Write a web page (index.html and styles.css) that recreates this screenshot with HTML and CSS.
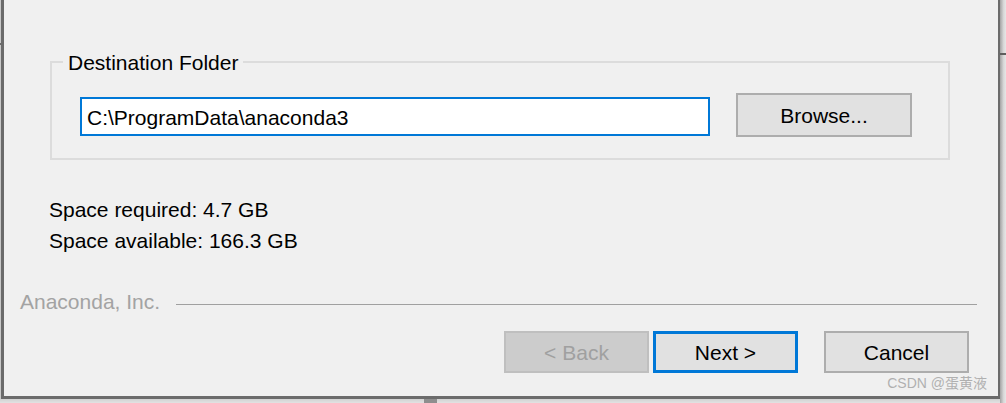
FILE: index.html
```html
<!DOCTYPE html>
<html>
<head>
<meta charset="utf-8">
<link rel="stylesheet" href="styles.css">
</head>
<body>
<div class="window">
  <fieldset class="group">
    <legend class="group-title">Destination Folder</legend>
    <div class="path-row">
      <input class="path-input" type="text" value="C:\ProgramData\anaconda3">
      <button class="btn browse">Browse...</button>
    </div>
  </fieldset>
  <div class="space">
    <div class="space-line">Space required: 4.7 GB</div>
    <div class="space-line">Space available: 166.3 GB</div>
  </div>
  <div class="brand-row">
    <span class="brand">Anaconda, Inc.</span>
    <span class="brand-line"></span>
  </div>
  <div class="actions">
    <button class="btn back" disabled>&lt; Back</button>
    <button class="btn next">Next &gt;</button>
    <button class="btn cancel">Cancel</button>
  </div>
  <div class="watermark">CSDN @蛋黄液</div>
</div>
</body>
</html>
```

FILE: styles.css
```css
html, body {
  margin: 0;
  padding: 0;
}
body {
  width: 1006px;
  height: 403px;
  overflow: hidden;
  font-family: "Liberation Sans", Arial, sans-serif;
  background:
    linear-gradient(#6b6b6b, #6b6b6b) 0 43px / 1px 2px no-repeat,
    linear-gradient(#5e5e5e, #5e5e5e) 1000px 53px / 6px 2px no-repeat,
    linear-gradient(#8e8e8e, #8e8e8e) 424px 399px / 13px 4px no-repeat,
    linear-gradient(to right, #a3a3a3, #d8d8d8 60%, #e6e6e6) 1000px 0 / 6px 100% no-repeat,
    linear-gradient(#d2d2d2, #e2e2e2) 0 399px / 1006px 4px no-repeat,
    #c9c9c9;
}
.window {
  position: relative;
  box-sizing: border-box;
  margin-left: 1px;
  width: 999px;
  height: 399px;
  background: #f0f0f0;
  border-left: 3px solid #6b6b6b;
  border-right: 2px solid #6b6b6b;
  border-bottom: 3px solid #6b6b6b;
  padding-top: 50px;
  display: flex;
  flex-direction: column;
}
.group {
  box-sizing: border-box;
  margin: 0 0 0 46px;
  width: 900px;
  border: 2px solid #dcdcdc;
  padding: 0 0 21px 11px;
  min-width: 0;
}
.group-title {
  font-size: 21px;
  line-height: 22px;
  padding: 2px 5px 0;
  color: #000;
}
.path-row {
  display: flex;
  align-items: flex-start;
  gap: 26px;
  padding: 19px 0 0 17px;
}
.path-input {
  box-sizing: border-box;
  width: 630px;
  height: 39px;
  margin: 4px 0 0;
  border: 2px solid #0078d7;
  background: #fff;
  padding: 3px 0 0 5px;
  font-family: "Liberation Sans", Arial, sans-serif;
  font-size: 21px;
  color: #000;
  outline: none;
}
.btn {
  box-sizing: border-box;
  width: 145px;
  height: 42px;
  margin: 0;
  padding: 2px 0 0;
  font-family: "Liberation Sans", Arial, sans-serif;
  font-size: 21px;
  color: #000;
  background: #e1e1e1;
  border: 2px solid #adadad;
}
.browse {
  width: 176px;
  height: 44px;
}
.space {
  margin: 34px 0 0 45px;
}
.space-line {
  font-size: 21px;
  line-height: 31px;
  color: #000;
}
.brand-row {
  display: flex;
  align-items: center;
  margin: 30px 21px 0 16px;
}
.brand {
  font-size: 21px;
  line-height: 31px;
  color: #a3a3a3;
}
.brand-line {
  flex: 1;
  height: 1px;
  margin: 5px 0 0 16px;
  background: #a0a0a0;
}
.actions {
  display: flex;
  justify-content: flex-end;
  margin: 14px 29px 0 0;
}
.back {
  background: #cccccc;
  border-color: #bfbfbf;
  color: #a0a0a0;
}
.next {
  margin-left: 4px;
  border: 3px solid #0078d7;
}
.cancel {
  margin-left: 26px;
}
.watermark {
  position: absolute;
  right: 11px;
  bottom: 5px;
  font-family: "Liberation Sans", "Noto Sans CJK SC", sans-serif;
  font-size: 14px;
  line-height: 16px;
  color: #b0b0b0;
}
```
